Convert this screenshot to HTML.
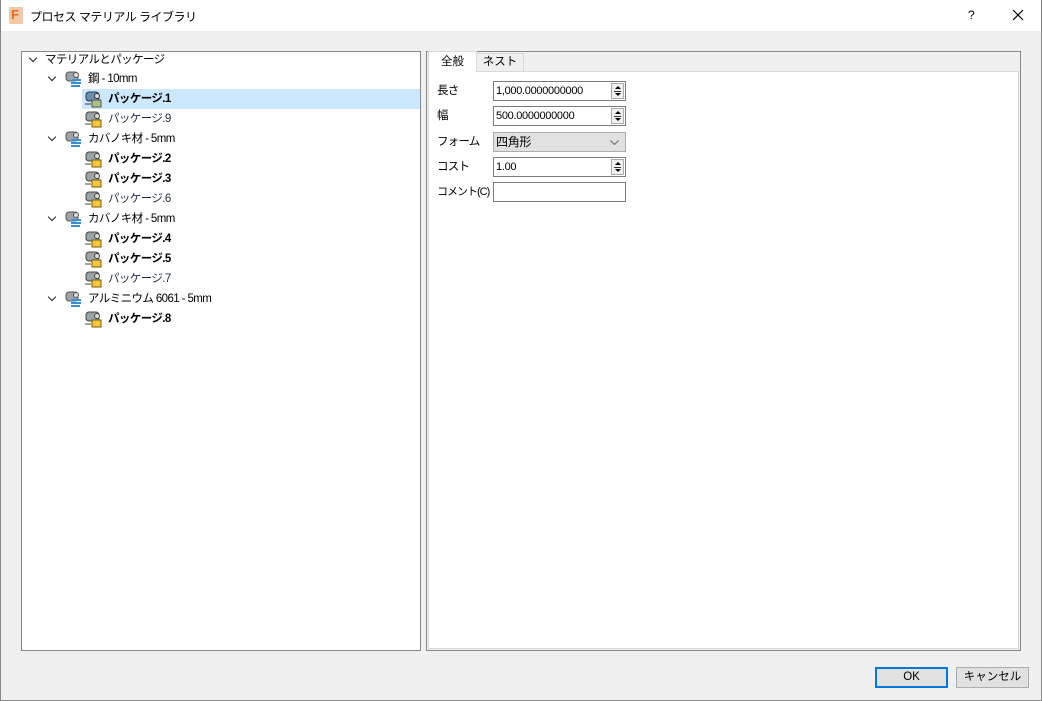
<!DOCTYPE html>
<html><head><meta charset="utf-8"><style>
*{box-sizing:border-box;margin:0;padding:0}
body{width:1042px;height:701px;overflow:hidden;background:#f0f0f0;font-family:"Liberation Sans","Noto Sans CJK JP",sans-serif;font-size:11.5px;color:#000;position:relative}
.win{position:absolute;left:0;top:0;width:1042px;height:701px;border:1px solid #888;border-top:none}
.title{position:absolute;left:0;top:0;width:1042px;height:31px;background:#fff}
.ab{position:absolute}
.row{position:absolute;height:20px;line-height:20px;white-space:nowrap;letter-spacing:-0.6px}
.b{font-weight:bold}
.g{color:#1f2a44}
.chev{position:absolute;width:6px;height:6px;border-right:1.6px solid #222;border-bottom:1.6px solid #222;transform:rotate(45deg)}
.inp{position:absolute;left:493px;width:133px;height:20px;border:1px solid #7a7a7a;background:#fff;line-height:18px;padding-left:2px;font-size:11px;letter-spacing:-0.3px}
.spin{position:absolute;right:1px;top:1px;width:13px;height:16px;border:1px solid #aaa;background:#f0f0f0}
.spin:before{content:"";position:absolute;left:3px;top:2px;border:3px solid transparent;border-bottom:3px solid #000;border-top:none}
.spin:after{content:"";position:absolute;left:3px;top:9px;border:3px solid transparent;border-top:3px solid #000;border-bottom:none}
.spin i{position:absolute;left:2px;top:7px;width:7px;height:1px;background:#333}
.lbl{position:absolute;left:437px;line-height:20px;letter-spacing:-0.8px}
.btn{position:absolute;top:667px;width:73px;height:21px;border:1px solid #adadad;background:#e1e1e1;text-align:center;line-height:19px}
</style></head><body>
<div class="title">
<div class="ab" style="left:9px;top:7px;width:14px;height:17px;background:#f3c9a8;border-radius:1px"><span style="position:absolute;left:2px;top:0;font-weight:bold;color:#e86a1f;font-size:13px">F</span></div>
<div class="ab" style="left:30px;top:8px;font-size:12px;letter-spacing:-0.5px">プロセス マテリアル ライブラリ</div>
<div class="ab" style="left:968px;top:8px;font-size:12px">?</div>
<svg class="ab" style="left:1012px;top:9px" width="12" height="12"><path d="M1 1L11 11M11 1L1 11" stroke="#000" stroke-width="1.2"/></svg>
</div>
<div class="win"></div>

<div class="ab" style="left:21px;top:51px;width:400px;height:600px;border:1px solid #828790;background:#fff"></div>
<div class="ab" style="left:82px;top:89px;width:338px;height:20px;background:#cce8ff"></div>
<div class="chev" style="left:30px;top:55px"></div>
<div class="row" style="left:45px;top:50px">マテリアルとパッケージ</div>

<svg width="0" height="0" style="position:absolute"><defs>
<g id="mat"><rect x="2" y="2" width="12" height="9" rx="3" fill="#9aa2aa" stroke="#555" stroke-width="1"/><circle cx="12" cy="5" r="2.5" fill="#ddd" stroke="#555"/><path d="M8 10h9M7 13h10M7 16h9" stroke="#3a8fd8" stroke-width="2"/></g>
<g id="pkg"><rect x="2" y="2" width="13" height="9" rx="3" fill="#9aa2aa" stroke="#444" stroke-width="1"/><circle cx="13" cy="6" r="2.5" fill="#ddd" stroke="#444"/><path d="M1 14h6" stroke="#444"/><rect x="8" y="10" width="9" height="7" fill="#f5c842" stroke="#7a5a00"/></g>
<g id="pkgs"><rect x="2" y="2" width="13" height="9" rx="3" fill="#6a8fb0" stroke="#334" stroke-width="1"/><circle cx="13" cy="6" r="2.5" fill="#ddd" stroke="#334"/><path d="M1 14h6" stroke="#334"/><rect x="8" y="10" width="9" height="7" fill="#a9c27a" stroke="#556"/></g>
</defs></svg>

<div class="chev" style="left:49px;top:74px"></div>
<svg class="ab" style="left:64px;top:70px" width="18" height="18"><use href="#mat"/></svg>
<div class="row" style="left:88px;top:69px">鋼 - 10mm</div>
<svg class="ab" style="left:84px;top:90px" width="18" height="18"><use href="#pkgs"/></svg>
<div class="row b" style="left:108px;top:89px">パッケージ.1</div>
<svg class="ab" style="left:84px;top:110px" width="18" height="18"><use href="#pkg"/></svg>
<div class="row g" style="left:108px;top:109px">パッケージ.9</div>

<div class="chev" style="left:49px;top:134px"></div>
<svg class="ab" style="left:64px;top:130px" width="18" height="18"><use href="#mat"/></svg>
<div class="row" style="left:88px;top:129px">カバノキ材 - 5mm</div>
<svg class="ab" style="left:84px;top:150px" width="18" height="18"><use href="#pkg"/></svg>
<div class="row b" style="left:108px;top:149px">パッケージ.2</div>
<svg class="ab" style="left:84px;top:170px" width="18" height="18"><use href="#pkg"/></svg>
<div class="row b" style="left:108px;top:169px">パッケージ.3</div>
<svg class="ab" style="left:84px;top:190px" width="18" height="18"><use href="#pkg"/></svg>
<div class="row g" style="left:108px;top:189px">パッケージ.6</div>

<div class="chev" style="left:49px;top:214px"></div>
<svg class="ab" style="left:64px;top:210px" width="18" height="18"><use href="#mat"/></svg>
<div class="row" style="left:88px;top:209px">カバノキ材 - 5mm</div>
<svg class="ab" style="left:84px;top:230px" width="18" height="18"><use href="#pkg"/></svg>
<div class="row b" style="left:108px;top:229px">パッケージ.4</div>
<svg class="ab" style="left:84px;top:250px" width="18" height="18"><use href="#pkg"/></svg>
<div class="row b" style="left:108px;top:249px">パッケージ.5</div>
<svg class="ab" style="left:84px;top:270px" width="18" height="18"><use href="#pkg"/></svg>
<div class="row g" style="left:108px;top:269px">パッケージ.7</div>

<div class="chev" style="left:49px;top:294px"></div>
<svg class="ab" style="left:64px;top:290px" width="18" height="18"><use href="#mat"/></svg>
<div class="row" style="left:88px;top:289px">アルミニウム 6061 - 5mm</div>
<svg class="ab" style="left:84px;top:310px" width="18" height="18"><use href="#pkg"/></svg>
<div class="row b" style="left:108px;top:309px">パッケージ.8</div>

<div class="ab" style="left:426px;top:51px;width:595px;height:600px;border:1px solid #828790;background:#f0f0f0"></div>
<div class="ab" style="left:428px;top:71px;width:591px;height:578px;border:1px solid #d9d9d9;background:#fff"></div>
<div class="ab" style="left:476px;top:53px;width:48px;height:19px;border:1px solid #d9d9d9;background:#f0f0f0;text-align:center;line-height:17px">ネスト</div>
<div class="ab" style="left:428px;top:51px;width:49px;height:21px;border:1px solid #d9d9d9;border-bottom:none;background:#fff;text-align:center;line-height:20px">全般</div>

<div class="lbl" style="top:81px">長さ</div>
<div class="inp" style="top:81px">1,000.0000000000<div class="spin"><i></i></div></div>
<div class="lbl" style="top:106px">幅</div>
<div class="inp" style="top:106px">500.0000000000<div class="spin"><i></i></div></div>
<div class="lbl" style="top:132px">フォーム</div>
<div class="inp" style="top:132px;background:#e1e1e1;border-color:#adadad;font-size:12px">四角形<svg class="ab" style="right:6px;top:7px" width="9" height="5"><path d="M0.5 0.5L4.5 4.5L8.5 0.5" fill="none" stroke="#666"/></svg></div>
<div class="lbl" style="top:157px">コスト</div>
<div class="inp" style="top:157px">1.00<div class="spin"><i></i></div></div>
<div class="lbl" style="top:182px;font-size:11px;letter-spacing:-1px">コメント(C)</div>
<div class="inp" style="top:182px"></div>

<div class="btn" style="left:875px;border:2px solid #0078d7;line-height:17px">OK</div>
<div class="btn" style="left:956px">キャンセル</div>
</body></html>
